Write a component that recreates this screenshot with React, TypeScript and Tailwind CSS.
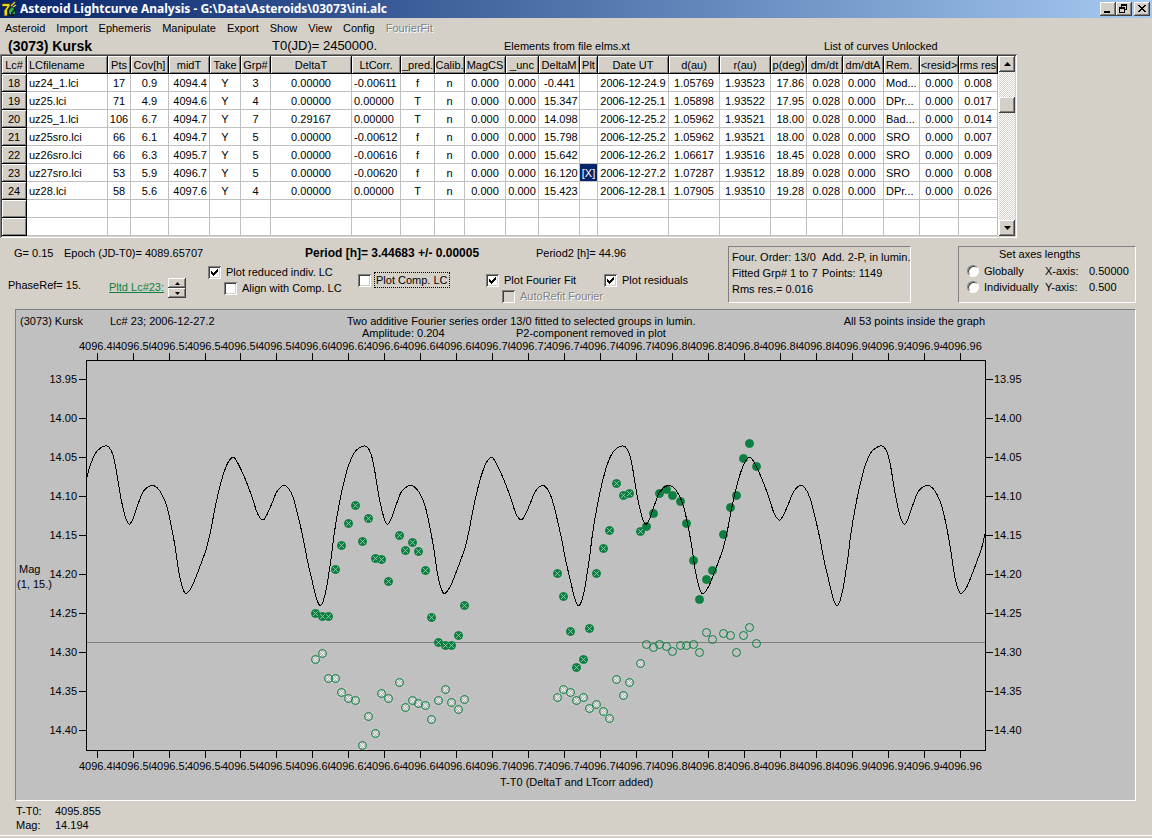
import { useState } from "react";
import type { ReactNode } from "react";

type Align = "left" | "center" | "right" | "indent";

const columns: { label: string; width: number; align: Align; head?: Align }[] = [
  { label: "LCfilename", width: 81, align: "left", head: "left" },
  { label: "Pts", width: 23, align: "center" },
  { label: "Cov[h]", width: 38, align: "center" },
  { label: "midT", width: 41, align: "right" },
  { label: "Take", width: 31, align: "center" },
  { label: "Grp#", width: 30, align: "center" },
  { label: "DeltaT", width: 81, align: "center" },
  { label: "LtCorr.", width: 49, align: "left" },
  { label: "_pred.", width: 34, align: "center" },
  { label: "Calib.", width: 30, align: "center" },
  { label: "MagCS", width: 41, align: "center" },
  { label: "_unc", width: 33, align: "center" },
  { label: "DeltaM", width: 41, align: "indent" },
  { label: "Plt", width: 18, align: "center" },
  { label: "Date UT", width: 71, align: "center" },
  { label: "d(au)", width: 51, align: "center" },
  { label: "r(au)", width: 51, align: "center" },
  { label: "p(deg)", width: 36, align: "right" },
  { label: "dm/dt", width: 36, align: "right" },
  { label: "dm/dtA", width: 41, align: "indent" },
  { label: "Rem.", width: 36, align: "left", head: "left" },
  { label: "<resid>", width: 39, align: "center" },
  { label: "rms res", width: 39, align: "center" },
];

const rows = [
  ["18", "uz24_1.lci", "17", "0.9", "4094.4", "Y", "3", "0.00000", "-0.00611", "f", "n", "0.000", "0.000", "-0.441", "", "2006-12-24.9", "1.05769", "1.93523", "17.86", "0.028", "0.000", "Mod...", "0.000", "0.008"],
  ["19", "uz25.lci", "71", "4.9", "4094.6", "Y", "4", "0.00000", "0.00000", "T", "n", "0.000", "0.000", "15.347", "", "2006-12-25.1", "1.05898", "1.93522", "17.95", "0.028", "0.000", "DPr...", "0.000", "0.017"],
  ["20", "uz25_1.lci", "106", "6.7", "4094.7", "Y", "7", "0.29167", "0.00000", "T", "n", "0.000", "0.000", "14.098", "", "2006-12-25.2", "1.05962", "1.93521", "18.00", "0.028", "0.000", "Bad...", "0.000", "0.014"],
  ["21", "uz25sro.lci", "66", "6.1", "4094.7", "Y", "5", "0.00000", "-0.00612", "f", "n", "0.000", "0.000", "15.798", "", "2006-12-25.2", "1.05962", "1.93521", "18.00", "0.028", "0.000", "SRO", "0.000", "0.007"],
  ["22", "uz26sro.lci", "66", "6.3", "4095.7", "Y", "5", "0.00000", "-0.00616", "f", "n", "0.000", "0.000", "15.642", "", "2006-12-26.2", "1.06617", "1.93516", "18.45", "0.028", "0.000", "SRO", "0.000", "0.009"],
  ["23", "uz27sro.lci", "53", "5.9", "4096.7", "Y", "5", "0.00000", "-0.00620", "f", "n", "0.000", "0.000", "16.120", "[X]", "2006-12-27.2", "1.07287", "1.93512", "18.89", "0.028", "0.000", "SRO", "0.000", "0.008"],
  ["24", "uz28.lci", "58", "5.6", "4097.6", "Y", "4", "0.00000", "0.00000", "T", "n", "0.000", "0.000", "15.423", "", "2006-12-28.1", "1.07905", "1.93510", "19.28", "0.028", "0.000", "DPr...", "0.000", "0.026"],
  Array(24).fill(""),
  Array(24).fill(""),
];

const alignClass: Record<Align, string> = {
  left: "text-left pl-[2px]",
  center: "text-center",
  right: "text-right pr-[2px]",
  indent: "text-left pl-[5px]",
};

const menus = ["Asteroid", "Import", "Ephemeris", "Manipulate", "Export", "Show", "View", "Config"];

const raised =
  "bg-[#d4d0c8] shadow-[inset_-1px_-1px_0_#404040,inset_1px_1px_0_#fff,inset_-2px_-2px_0_#808080]";
const headCell =
  "h-[18px] overflow-hidden border-r border-b border-black bg-[#d4d0c8] p-0 font-normal shadow-[inset_1px_1px_0_#fff,inset_-1px_-1px_0_#808080]";

// one period of the fitted curve, in plot pixels
const PERIOD = 258.35;
const shape: [number, number][] = [
  [105.3, 446], [108.8, 447], [112.7, 454], [115.7, 467], [119, 487], [121.7, 502], [125.7, 518],
  [129.3, 524.3], [133.3, 518], [138.3, 503.5], [143.3, 491.5], [151, 485.5], [156.7, 487.3],
  [161.7, 494], [166.7, 506], [170.7, 523], [175, 546], [178.7, 571], [181.7, 585], [184.3, 592],
  [186.7, 593.5], [191.7, 587], [196.7, 575], [202, 561], [206.7, 547.5], [211, 529], [215, 508],
  [219.3, 489], [223.3, 474.5], [228, 462.5], [233.3, 457.3], [238, 463.5], [245, 478.5], [251.7, 496],
  [257.3, 513], [262.7, 520], [266.7, 515], [271.7, 504], [276.7, 492], [283.3, 485.5], [288.3, 488],
  [293.3, 498], [298.3, 517], [303.3, 539], [307.3, 560], [311.7, 579], [316, 597], [318.7, 604],
  [320.7, 605.5], [323.3, 601], [326.7, 587], [329.3, 570], [331.3, 557], [334.3, 533], [340, 500],
  [344.5, 480], [348.7, 465], [354, 453], [359, 448],
];

const curvePoints = [-1, 0, 1, 2, 3].flatMap((k) =>
  shape.map(([x, y]) => [x + k * PERIOD, y] as [number, number])
);

function smoothPath(pts: [number, number][]) {
  let d = `M${pts[1][0]} ${pts[1][1]}`;
  for (let i = 1; i < pts.length - 2; i++) {
    const [p0, p1, p2, p3] = [pts[i - 1], pts[i], pts[i + 1], pts[i + 2]];
    d += `C${p1[0] + (p2[0] - p0[0]) / 6} ${p1[1] + (p2[1] - p0[1]) / 6} ${p2[0] - (p3[0] - p1[0]) / 6} ${p2[1] - (p3[1] - p1[1]) / 6} ${p2[0]} ${p2[1]}`;
  }
  return d;
}

const excluded = [
  [355, 505], [348, 523], [368, 518], [341, 545], [362, 541], [375, 558], [381, 559], [399, 535],
  [412, 542], [405, 550], [418, 551], [335, 569], [388, 581], [315, 613], [322, 616], [328, 616],
  [425, 570], [431, 617], [464, 605], [458, 635], [438, 642], [445, 645], [451, 645], [557, 573],
  [563, 596], [570, 631], [589, 628], [596, 573], [576, 667], [583, 659], [616, 483], [623, 495],
  [629, 493], [609, 530], [603, 548], [640, 531],
];

const included = [
  [646, 526], [653, 513], [659, 493], [666, 489], [672, 495], [680, 501], [686, 523], [693, 560],
  [699, 599], [706, 579], [712, 570], [723, 534], [730, 507], [736, 495], [743, 458], [749, 443],
  [756, 466],
];

const excludedResiduals = [
  [315, 659], [322, 653], [328, 678], [335, 678], [341, 692], [348, 698], [355, 700], [362, 745],
  [368, 716], [375, 733], [381, 693], [388, 698], [399, 682], [405, 707], [412, 700], [418, 703],
  [425, 705], [431, 719], [438, 700], [445, 689], [451, 702], [458, 709], [464, 699], [557, 697],
  [563, 689], [570, 692], [576, 700], [583, 697], [589, 708], [596, 704], [603, 711], [609, 718],
  [616, 679], [623, 695], [629, 682], [640, 663],
];

const residuals = [
  [646, 644], [653, 647], [659, 644], [666, 646], [672, 651], [680, 645], [686, 645], [693, 644],
  [699, 652], [706, 632], [712, 639], [723, 633], [730, 635], [736, 652], [743, 635], [749, 627],
  [756, 643],
];

const xTicks = Array.from({ length: 25 }, (_, i) => ({
  x: Math.floor(97.13 + i * 35.96),
  label: (4096.48 + i * 0.02).toFixed(2),
}));

const yTicks = Array.from({ length: 10 }, (_, i) => ({
  y: 379 + i * 39,
  label: (13.95 + i * 0.05).toFixed(2),
}));

function Marker({ x, y, filled, crossed }: { x: number; y: number; filled?: boolean; crossed?: boolean }) {
  return (
    <g transform={`translate(${x + 0.5} ${y + 0.5})`}>
      {crossed && !filled && (
        <path d="M-4-4L4 4M-4 4L4-4" stroke="#fff" strokeWidth="0.8" />
      )}
      <circle r="4" fill={filled ? "#0c8040" : "none"} stroke="#0c8040" />
      {crossed && filled && (
        <path d="M-2.5-2.5L2.5 2.5M-2.5 2.5L2.5-2.5" stroke="#c0d8c8" strokeWidth="0.7" />
      )}
    </g>
  );
}

function Chart() {
  return (
    <svg viewBox="16 310 1119 490" className="block h-auto w-full" fontSize="11" fill="#000">
      <clipPath id="plot">
        <rect x="87" y="361" width="898" height="389" />
      </clipPath>

      <text x="20" y="325">(3073) Kursk</text>
      <text x="110" y="325">Lc# 23; 2006-12-27.2</text>
      <text x="347" y="325">Two additive Fourier series order 13/0 fitted to selected groups in lumin.</text>
      <text x="362" y="337">Amplitude: 0.204</text>
      <text x="516" y="337">P2-component removed in plot</text>
      <text x="985" y="325" textAnchor="end">All 53 points inside the graph</text>

      {/* the labels are wider than the tick step, so each one covers the end of the last */}
      {xTicks.map((t) => (
        <g key={t.x}>
          <rect x={t.x - 18} y="339" width="39" height="12" fill="#c0c0c0" />
          <text x={t.x - 18} y="350">{t.label}</text>
          <rect x={t.x - 18} y="760" width="39" height="12" fill="#c0c0c0" />
          <text x={t.x - 18} y="770">{t.label}</text>
        </g>
      ))}
      {yTicks.map((t) => (
        <g key={t.y}>
          <text x="77" y={t.y + 4} textAnchor="end">{t.label}</text>
          <text x="994" y={t.y + 4}>{t.label}</text>
        </g>
      ))}
      <text x="19" y="573">Mag</text>
      <text x="17" y="588">(1, 15.)</text>
      <text x="500" y="786">T-T0 (DeltaT and LTcorr added)</text>

      <g stroke="#000" fill="none" shapeRendering="crispEdges">
        <rect x="86.5" y="360.5" width="899" height="390" />
        {xTicks.map((t) => (
          <path key={t.x} d={`M${t.x + 0.5} 353V360M${t.x + 0.5} 751V758`} />
        ))}
        {yTicks.map((t) => (
          <path key={t.y} d={`M79 ${t.y + 0.5}H86M986 ${t.y + 0.5}H993`} />
        ))}
        <path d="M87 642.5H985" stroke="#808080" />
      </g>

      {excluded.map(([x, y]) => <Marker key={`${x}-${y}`} x={x} y={y} filled crossed />)}
      {included.map(([x, y]) => <Marker key={`${x}-${y}`} x={x} y={y} filled />)}
      {excludedResiduals.map(([x, y]) => <Marker key={`${x}-${y}`} x={x} y={y} crossed />)}
      {residuals.map(([x, y]) => <Marker key={`${x}-${y}`} x={x} y={y} />)}

      <path
        d={smoothPath(curvePoints)}
        clipPath="url(#plot)"
        fill="none"
        stroke="#000"
        shapeRendering="crispEdges"
      />
    </svg>
  );
}

function CheckBox({
  label,
  defaultChecked,
  disabled,
  focused,
}: {
  label: string;
  defaultChecked?: boolean;
  disabled?: boolean;
  focused?: boolean;
}) {
  return (
    <label className="flex h-4 items-center gap-1 whitespace-nowrap">
      <span className="relative h-[13px] w-[13px]">
        <input
          type="checkbox"
          defaultChecked={defaultChecked}
          disabled={disabled}
          className="peer block h-[13px] w-[13px] appearance-none bg-white shadow-[inset_1px_1px_0_#808080,inset_-1px_-1px_0_#fff,inset_2px_2px_0_#404040,inset_-2px_-2px_0_#d4d0c8] disabled:bg-[#d4d0c8]"
        />
        <svg viewBox="0 0 7 7" className="pointer-events-none absolute top-[3px] left-[3px] hidden h-[7px] w-[7px] peer-checked:block" shapeRendering="crispEdges">
          <path d="M0 2h1v1h1v1h1v-1h1v-1h1v-1h1v-1h1v3h-1v1h-1v1h-1v1h-1v1h-1v-1h-1v-1h-1z" />
        </svg>
      </span>
      <span
        className={
          disabled
            ? "px-px text-[#808080] [text-shadow:1px_1px_0_#fff]"
            : focused
              ? "px-px outline-1 outline-black outline-dotted"
              : "px-px"
        }
      >
        {label}
      </span>
    </label>
  );
}

function Radio({ label }: { label: string }) {
  return (
    <label className="flex h-4 items-center gap-[5px]">
      <input
        type="radio"
        name="axes"
        className="h-3 w-3 appearance-none rounded-full border border-t-[#808080] border-r-white border-b-white border-l-[#808080] bg-white shadow-[inset_1px_1px_0_#404040] checked:bg-black"
      />
      {label}
    </label>
  );
}

function WindowButton({ label, children }: { label: string; children: ReactNode }) {
  return (
    <button aria-label={label} className={`h-[14px] w-4 ${raised}`}>
      <svg viewBox="0 0 16 14" className="block h-[14px] w-4" fill="#000" shapeRendering="crispEdges">
        {children}
      </svg>
    </button>
  );
}

function ArrowButton({ label, up, small }: { label: string; up?: boolean; small?: boolean }) {
  return (
    <button
      aria-label={label}
      className={`flex items-center justify-center ${small ? "h-[10px] w-[18px]" : "h-4 w-4"} ${raised}`}
    >
      <svg viewBox="0 0 7 4" className={small ? "h-[3px] w-[5px]" : "h-[4px] w-[7px]"}>
        <path d={up ? "M0 4L3.5 0L7 4Z" : "M0 0L3.5 4L7 0Z"} />
      </svg>
    </button>
  );
}

export default function App() {
  const [selected, setSelected] = useState("23");

  return (
    <div className="min-h-screen bg-[#d4d0c8] font-['Liberation_Sans',Arial,sans-serif] text-[11px] leading-[14px] text-black">
      <header className="flex h-[18px] items-center bg-linear-to-r from-[#0a246a] to-[#a6caf0] pr-[2px]">
        <svg viewBox="0 0 16 16" className="mr-[3px] ml-px h-4 w-4">
          <path d="M7 6h5l3 3v3l-3 3H8L6 12z" fill="#102010" />
          <path d="M8 9l3-3 2 2-2 3-3 1zM11 13l3-3v3z" fill="#30b048" />
          <path d="M8 12l2-1v3z" fill="#50a0e0" />
          <path d="M1 2.500h8v2.500L6.500 9v6H3V9.500l3-4H1z" fill="#e8d820" stroke="#302800" strokeWidth="0.8" />
          <path d="M10 5l4-4M12 6l3-2" stroke="#e8d820" strokeWidth="1.3" />
        </svg>
        <h1 className="font-['Noto_Sans',sans-serif] text-[12px] font-bold whitespace-nowrap text-white">
          Asteroid Lightcurve Analysis - G:\Data\Asteroids\03073\ini.alc
        </h1>
        <div className="ml-auto flex">
          <WindowButton label="Minimize"><path d="M4 9h6v2h-6z" /></WindowButton>
          <WindowButton label="Restore">
            <path fillRule="evenodd" d="M5 2h6v6h-2v3h-6v-6h2zM6 4v1h3v2h1v-3zM4 7v3h4v-3z" />
          </WindowButton>
          <span className="w-[2px]" />
          <WindowButton label="Close">
            <path d="M4 3h2v1h1v1h2v-1h1v-1h2v1h-1v1h-1v1h-1v1h1v1h1v1h1v1h-2v-1h-1v-1h-2v1h-1v1h-2v-1h1v-1h1v-1h1v-1h-1v-1h-1v-1h-1z" />
          </WindowButton>
        </div>
      </header>

      <nav className="flex h-5 items-center gap-[11px] pl-[5px]">
        {menus.map((item) => (
          <button key={item}>{item}</button>
        ))}
        <button disabled className="text-[#808080] [text-shadow:1px_1px_0_#fff]">FourierFit</button>
      </nav>

      <div className="grid h-4 grid-cols-[264px_232px_320px_1fr] items-center pl-2 whitespace-nowrap">
        <h2 className="text-[14px] font-bold">(3073) Kursk</h2>
        <span className="text-[13px]">T0(JD)= 2450000.</span>
        <span>Elements from file elms.xt</span>
        <span>List of curves Unlocked</span>
      </div>

      <div className="flex w-fit bg-white p-[2px] shadow-[inset_1px_1px_0_#808080,inset_-1px_-1px_0_#fff,inset_2px_2px_0_#404040,inset_-2px_-2px_0_#d4d0c8]">
        <table className="w-[996px] table-fixed border-separate border-spacing-0 whitespace-nowrap">
          <colgroup>
            <col style={{ width: 25 }} />
            {columns.map((c) => (
              <col key={c.label} style={{ width: c.width }} />
            ))}
          </colgroup>
          <thead>
            <tr>
              <th className={`${headCell} text-center`}>Lc#</th>
              {columns.map((c) => (
                <th key={c.label} className={`${headCell} ${alignClass[c.head ?? "center"]}`}>
                  {c.label}
                </th>
              ))}
            </tr>
          </thead>
          <tbody>
            {rows.map((row, i) => (
              <tr key={i} onClick={() => row[0] && setSelected(row[0])}>
                <th className={`${headCell} text-center`}>{row[0]}</th>
                {columns.map((c, j) => {
                  const plotted = c.label === "Plt" && row[0] !== "" && row[0] === selected;
                  return (
                    <td
                      key={c.label}
                      className={`h-[18px] overflow-hidden border-r border-b border-[#c0c0c0] p-0 ${alignClass[c.align]} ${
                        plotted ? "bg-[#0a246a] text-white" : ""
                      }`}
                    >
                      {c.label === "Plt" ? (plotted ? "[X]" : "") : row[j + 1]}
                    </td>
                  );
                })}
              </tr>
            ))}
          </tbody>
        </table>
        <div className="ml-px flex w-4 flex-col bg-[repeating-conic-gradient(#fff_0_25%,#d4d0c8_0_50%)] bg-[length:2px_2px]">
          <ArrowButton label="Scroll up" up />
          <div className={`mt-[25px] mb-auto h-4 w-4 ${raised}`} />
          <ArrowButton label="Scroll down" />
        </div>
      </div>

      <section className="flex pt-2 pr-4 whitespace-nowrap">
        <div className="w-[728px]">
          <div className="grid grid-cols-[50px_241px_231px_1fr] pl-[14px]">
            <span>G= 0.15</span>
            <span>Epoch (JD-T0)= 4089.65707</span>
            <b className="text-[12px]">Period [h]= 3.44683 +/- 0.00005</b>
            <span>Period2 [h]= 44.96</span>
          </div>
          <div className="mt-1 flex">
            <span className="mt-[14px] w-[109px] pl-2">PhaseRef= 15.</span>
            <div className="mt-[14px] flex w-[99px] gap-1">
              <a href="#plot" className="mt-[2px] text-[#0c8040] underline">Pltd Lc#23:</a>
              <div className="flex flex-col">
                <ArrowButton label="Next curve" up small />
                <ArrowButton label="Previous curve" small />
              </div>
            </div>
            <div className="w-[150px]">
              <CheckBox label="Plot reduced indiv. LC" defaultChecked />
              <div className="pl-4">
                <CheckBox label="Align with Comp. LC" />
              </div>
            </div>
            <div className="w-[128px] pt-2">
              <CheckBox label="Plot Comp. LC" focused />
            </div>
            <div className="w-[118px] pt-2">
              <CheckBox label="Plot Fourier Fit" defaultChecked />
              <div className="pl-4">
                <CheckBox label="AutoRefit Fourier" disabled />
              </div>
            </div>
            <div className="pt-2">
              <CheckBox label="Plot residuals" defaultChecked />
            </div>
          </div>
        </div>

        <div className="grid h-[57px] w-[183px] grid-cols-[90px_1fr] content-start border border-t-[#808080] border-r-white border-b-white border-l-[#808080] pt-[2px] pl-[3px] leading-4">
          <span>Four. Order: 13/0</span>
          <span>Add. 2-P, in lumin.</span>
          <span>Fitted Grp# 1 to 7</span>
          <span>Points: 1149</span>
          <span>Rms res.= 0.016</span>
        </div>

        <fieldset className="ml-auto h-[57px] w-[178px] border border-t-[#808080] border-r-white border-b-white border-l-[#808080] pl-2">
          <div className="pl-8">Set axes lengths</div>
          <div className="mt-[2px] grid grid-cols-[78px_44px_1fr] items-center">
            <Radio label="Globally" />
            <span>X-axis:</span>
            <span>0.50000</span>
            <Radio label="Individually" />
            <span>Y-axis:</span>
            <span>0.500</span>
          </div>
        </fieldset>
      </section>

      <main className="mt-[5px] mr-4 ml-[15px] border border-t-[#808080] border-r-white border-b-white border-l-[#808080] bg-[#c0c0c0]">
        <Chart />
      </main>

      <footer className="border-b border-white pt-[3px] pb-[3px] pl-4">
        <dl className="grid grid-cols-[39px_1fr]">
          <dt>T-T0:</dt>
          <dd>4095.855</dd>
          <dt>Mag:</dt>
          <dd>14.194</dd>
        </dl>
      </footer>
    </div>
  );
}
